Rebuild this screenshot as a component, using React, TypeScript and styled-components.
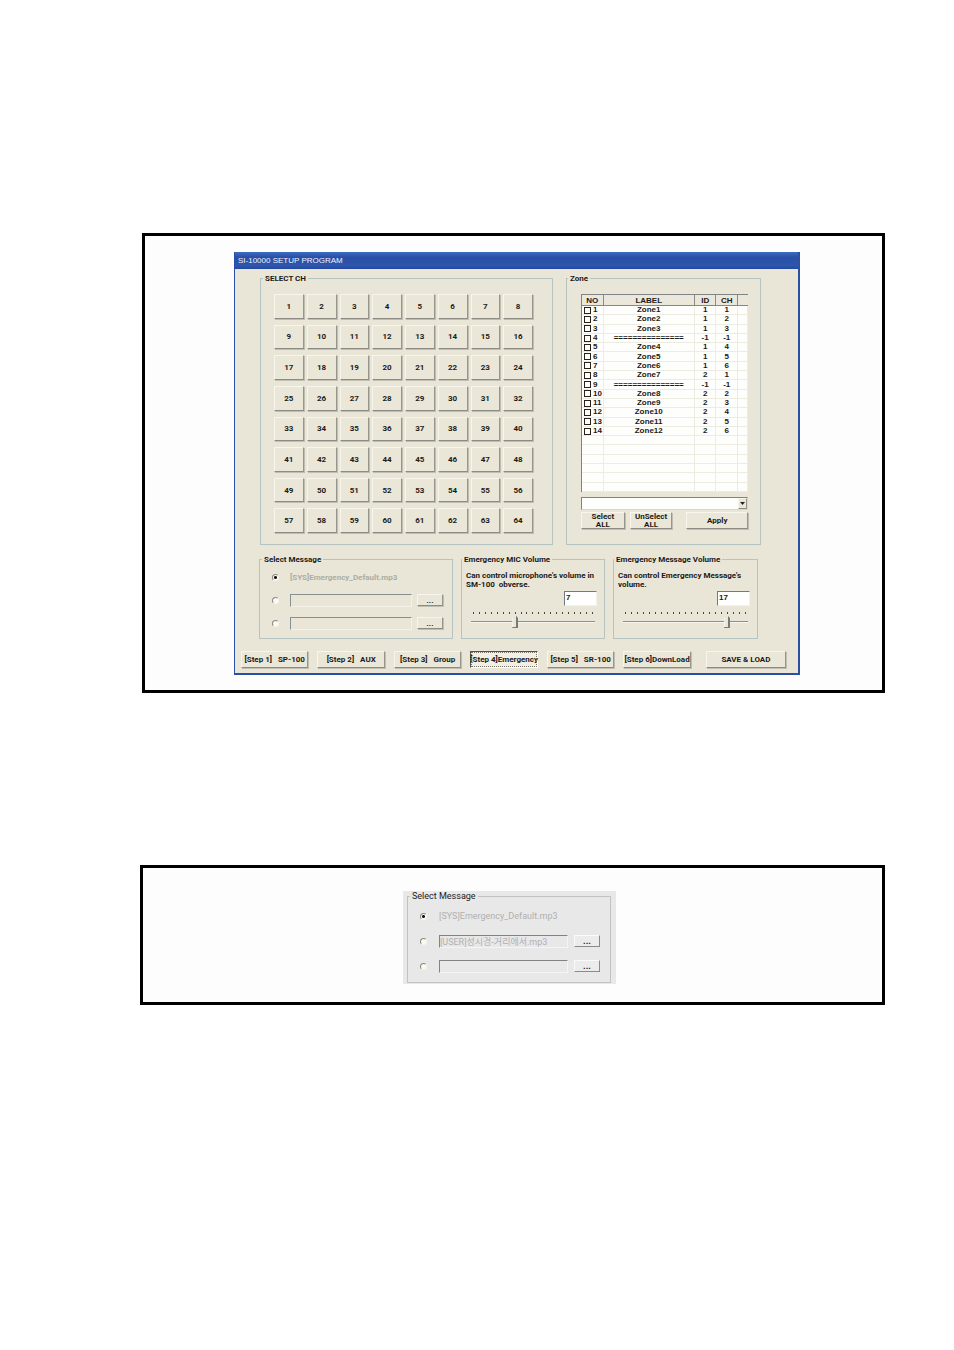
import React, { useState } from 'react';
import styled, { createGlobalStyle, css } from 'styled-components';

const GlobalStyle = createGlobalStyle`
  *, *::before, *::after { box-sizing: border-box; }
  body {
    margin: 0;
    background: #fff;
    color: #1c1a18;
    font: bold 8px/9px Roboto, "Noto Sans CJK KR", sans-serif;
  }
  button, input, select { font: inherit; color: inherit; margin: 0; border-radius: 0; }
`;

const Page = styled.main`
  display: flex;
  flex-direction: column;
  gap: 172px;
  padding: 233px 69px 100px 140px;
`;

const Frame = styled.section<{ $pad: string; $inset?: boolean }>`
  border: 3px solid #000;
  background: #fdfdfd;
  padding: ${(p) => p.$pad};
  margin-left: ${(p) => (p.$inset ? '2px' : '0')};
`;

const Window = styled.div`
  background: #e9e6d7;
  border: solid #2c4fa6;
  border-width: 0 2px 2px 1px;
`;

const TitleBar = styled.h1`
  margin: 0;
  padding: 0 3px;
  font: normal 8px/17px "Liberation Sans", sans-serif;
  color: #eef2ff;
  background: linear-gradient(#3c6cc0, #2a50a6 30%, #2c55ab 80%, #2448a0);
`;

const WindowBody = styled.div`
  padding: 5px 12px 5px 6px;
`;

const TopRow = styled.div`
  display: grid;
  grid-template-columns: 293fr 195fr;
  gap: 13px;
  padding: 0 25px 0 19px;
`;

const LowerRow = styled.div`
  display: grid;
  grid-template-columns: 194fr 144fr 145fr;
  column-gap: 8px;
  margin-top: 10px;
  padding: 0 28px 0 18px;
`;

const Group = styled.fieldset<{ $pad: string; $mono?: boolean }>`
  min-width: 0;
  margin: 0;
  padding: ${(p) => p.$pad};
  border: 1px solid ${(p) => (p.$mono ? '#c2c2c2' : '#b6c3c3')};
  display: flex;
  flex-direction: column;
`;

const Legend = styled.legend<{ $at: string }>`
  padding: 0 2px;
  margin-left: ${(p) => p.$at};
`;

const raised = css`
  border: 1px solid;
  border-color: #f7f5ec #96968c #8c8c84 #f7f5ec;
  background: #eae7d9;
  box-shadow: 1px 1px 0 #c0beb0;
`;

const Button = styled.button<{ $mono?: boolean }>`
  ${raised}
  display: flex;
  align-items: center;
  justify-content: center;
  padding: 0;
  min-width: 0;
  text-align: center;
  white-space: pre;
  ${(p) => p.$mono && css`
    background: #ececec;
    border-color: #fafafa #8a8a8a #8a8a8a #fafafa;
    box-shadow: none;
  `}
`;

const ChannelGrid = styled.div`
  flex: 1;
  display: grid;
  grid-template-columns: repeat(8, 1fr);
  grid-auto-rows: 1fr;
  gap: 6px 3px;
`;

const ZoneTable = styled.table`
  width: 100%;
  height: 198px;
  table-layout: fixed;
  border-collapse: separate;
  border-spacing: 0;
  border: solid #7d8488;
  border-width: 1px 0 0 1px;
  background: #fefefc;
  font-family: "Liberation Sans", sans-serif;
  text-align: center;

  th, td { padding: 0; overflow: hidden; white-space: nowrap; }
  th {
    height: 11px;
    background: #ebe7da;
    border-right: 1px solid #8d8b80;
    border-bottom: 1px solid #7c8a90;
  }
  th:last-child { border-right: 0; }
  td {
    height: 9px;
    line-height: 8px;
    border: solid #ecece0;
    border-width: 0 1px 1px 0;
  }
`;

const ZoneCheck = styled.label`
  display: flex;
  align-items: center;
  gap: 2px;
  padding-left: 2px;
`;

const CheckBox = styled.input`
  appearance: none;
  flex: none;
  width: 7px;
  height: 7px;
  border: 1px solid #2a2018;
  background: #fff;
  &:checked { background: #2a2018; box-shadow: inset 0 0 0 1px #fff; }
`;

const ComboWrap = styled.div`
  position: relative;
  margin-top: 5px;
  height: 13px;
`;

const Combo = styled.select`
  appearance: none;
  display: block;
  width: 100%;
  height: 13px;
  padding: 0 14px 0 2px;
  background: #fefefc;
  border: 1px solid;
  border-color: #7d8488 #d8d6c8 #d8d6c8 #7d8488;
`;

const ComboArrow = styled.span`
  ${raised}
  position: absolute;
  top: 1px;
  right: 1px;
  width: 9px;
  height: 11px;
  display: flex;
  align-items: center;
  justify-content: center;
  box-shadow: none;
  pointer-events: none;
`;

const ZoneActions = styled.div`
  display: grid;
  grid-template-columns: 44fr 43fr 71fr;
  column-gap: 5px;
  margin-top: 2px;
  button { height: 17px; line-height: 8px; }
  button:last-child { margin-left: 9px; }
`;

const MessageRow = styled.div<{ $gap: string }>`
  display: flex;
  align-items: center;
  gap: ${(p) => p.$gap};
  height: 12px;
  & + & { margin-top: 11px; }
`;

const Radio = styled.input`
  appearance: none;
  flex: none;
  width: 7px;
  height: 7px;
  margin-right: 6px;
  border: 1px solid;
  border-color: #8a8a80 #f6f4ea #f6f4ea #8a8a80;
  border-radius: 50%;
  background: #faf9f4;
  &:checked { background: radial-gradient(circle, #141210 0 1px, #faf9f4 2px); }
`;

const FileText = styled.label<{ $mono?: boolean }>`
  color: ${(p) => (p.$mono ? '#b0b0b0' : '#a9aea4')};
`;

const FileInput = styled.input<{ $mono?: boolean }>`
  flex: 1;
  min-width: 0;
  height: 13px;
  padding: 0;
  background: transparent;
  border: 1px solid;
  border-color: ${(p) => (p.$mono ? '#828282 #f4f4f4 #f4f4f4 #828282' : '#86908f #f4f2e8 #f4f2e8 #86908f')};
  color: #b0b0b0;
`;

const BrowseButton = styled(Button)`
  flex: none;
  width: 26px;
  height: 12px;
  font-weight: bold;
`;

const Description = styled.p`
  margin: 0;
  white-space: pre;
`;

const VolumeInput = styled.input`
  align-self: flex-end;
  width: 33px;
  height: 15px;
  margin: 2px 4px 0 0;
  padding: 0 1px 3px;
  background: #fefefe;
  border: 1px solid;
  border-color: #6f7b80 #f4f2e8 #f4f2e8 #6f7b80;
  font-family: "Liberation Sans", sans-serif;
`;

const Ticks = styled.div`
  display: flex;
  justify-content: space-between;
  margin: 6px 8px 0 7px;
  i { width: 1px; height: 2px; background: #4a463e; }
`;

const Slider = styled.input`
  appearance: none;
  display: block;
  height: 13px;
  margin: 1px 6px 0 5px;
  background: linear-gradient(#8a8f8a, #8a8f8a) 0 6px / 100% 1px no-repeat,
    linear-gradient(#f8f6ee, #f8f6ee) 0 7px / 100% 1px no-repeat;
  &::-webkit-slider-thumb {
    appearance: none;
    width: 6px;
    height: 13px;
    background: linear-gradient(90deg, #f8f6ee 1px, #eae7d9 1px 4px, #75797a 4px);
    border-bottom: 1px solid #75797a;
    clip-path: polygon(50% 0, 100% 25%, 100% 100%, 0 100%, 0 25%);
  }
`;

const StepBar = styled.nav`
  display: flex;
  gap: 9px;
  margin-top: 12px;
`;

const StepButton = styled(Button)<{ $active?: boolean; $last?: boolean }>`
  flex: ${(p) => (p.$last ? 80 : 67)} 1 0;
  height: 17px;
  margin-left: ${(p) => (p.$last ? '6px' : '0')};
  ${(p) => p.$active && css`
    background: #f2efe4;
    border-color: #55534c #fff #fff #55534c;
    outline: 1px dotted #77746a;
    outline-offset: -2px;
    box-shadow: none;
  `}
`;

const MessagePanel = styled.div`
  padding: 1px 5px 1px 4px;
  background: #e8e8e8;
  color: #222;
  font-weight: normal;
  font-size: 9px;
  ${MessageRow} + ${MessageRow} { margin-top: 13px; }
`;

const zones: [string, string, string][] = [
  ['Zone1', '1', '1'],
  ['Zone2', '1', '2'],
  ['Zone3', '1', '3'],
  ['===============', '-1', '-1'],
  ['Zone4', '1', '4'],
  ['Zone5', '1', '5'],
  ['Zone6', '1', '6'],
  ['Zone7', '2', '1'],
  ['===============', '-1', '-1'],
  ['Zone8', '2', '2'],
  ['Zone9', '2', '3'],
  ['Zone10', '2', '4'],
  ['Zone11', '2', '5'],
  ['Zone12', '2', '6'],
];

const steps = [
  '[Step 1]   SP-100',
  '[Step 2]   AUX',
  '[Step 3]   Group',
  '[Step 4]Emergency',
  '[Step 5]   SR-100',
  '[Step 6]DownLoad',
];

function MessageFields({ name, user, mono }: { name: string; user: string; mono?: boolean }) {
  return (
    <>
      <MessageRow $gap={mono ? '6px' : '5px'}>
        <Radio type="radio" name={name} id={`${name}-0`} defaultChecked />
        <FileText htmlFor={`${name}-0`} $mono={mono}>[SYS]Emergency_Default.mp3</FileText>
      </MessageRow>
      {[user, ''].map((value, i) => (
        <MessageRow key={i} $gap={mono ? '6px' : '5px'}>
          <Radio type="radio" name={name} aria-label={`User message ${i + 1}`} />
          <FileInput $mono={mono} defaultValue={value} aria-label={`File of user message ${i + 1}`} />
          <BrowseButton $mono={mono} type="button">...</BrowseButton>
        </MessageRow>
      ))}
    </>
  );
}

function Volume({ title, text, initial }: { title: string; text: string; initial: number }) {
  const [value, setValue] = useState(initial);
  return (
    <Group $pad="7px 3px 0 4px">
      <Legend $at="-4px">{title}</Legend>
      <Description>{text}</Description>
      <VolumeInput
        aria-label={title}
        value={value}
        onChange={(e) => setValue(Number(e.target.value) || 0)}
      />
      <Ticks>{Array.from({ length: 21 }, (_, i) => <i key={i} />)}</Ticks>
      <Slider
        type="range"
        min={0}
        max={20}
        aria-label={`${title} slider`}
        value={value}
        onChange={(e) => setValue(Number(e.target.value))}
      />
    </Group>
  );
}

export default function App() {
  return (
    <Page>
      <GlobalStyle />
      <Frame $inset $pad="16px 82px 15px 89px">
        <Window>
          <TitleBar>SI-10000 SETUP PROGRAM</TitleBar>
          <WindowBody>
            <TopRow>
              <Group $pad="11px 19px 11px 13px">
                <Legend $at="-11px">SELECT CH</Legend>
                <ChannelGrid>
                  {Array.from({ length: 64 }, (_, i) => (
                    <Button key={i} type="button">{i + 1}</Button>
                  ))}
                </ChannelGrid>
              </Group>
              <Group $pad="11px 12px 15px 14px">
                <Legend $at="-13px">Zone</Legend>
                <ZoneTable>
                  <colgroup>
                    <col style={{ width: '13%' }} />
                    <col />
                    <col style={{ width: '13%' }} />
                    <col style={{ width: '13%' }} />
                    <col style={{ width: '6%' }} />
                  </colgroup>
                  <thead>
                    <tr><th>NO</th><th>LABEL</th><th>ID</th><th>CH</th><th /></tr>
                  </thead>
                  <tbody>
                    {zones.map(([label, id, ch], i) => (
                      <tr key={i}>
                        <td><ZoneCheck><CheckBox type="checkbox" />{i + 1}</ZoneCheck></td>
                        <td>{label}</td>
                        <td>{id}</td>
                        <td>{ch}</td>
                        <td />
                      </tr>
                    ))}
                    {Array.from({ length: 6 }, (_, i) => (
                      <tr key={`empty-${i}`}><td /><td /><td /><td /><td /></tr>
                    ))}
                  </tbody>
                </ZoneTable>
                <ComboWrap>
                  <Combo aria-label="Zone group" defaultValue=""><option value="" /></Combo>
                  <ComboArrow>
                    <svg width="5" height="3" viewBox="0 0 10 6"><path d="M0 0h10L5 6z" fill="#222" /></svg>
                  </ComboArrow>
                </ComboWrap>
                <ZoneActions>
                  <Button type="button">{'Select\nALL'}</Button>
                  <Button type="button">{'UnSelect\nALL'}</Button>
                  <Button type="button">Apply</Button>
                </ZoneActions>
              </Group>
            </TopRow>
            <LowerRow>
              <Group $pad="7px 9px 9px 12px">
                <Legend $at="-10px">Select Message</Legend>
                <MessageFields name="message" user="" />
              </Group>
              <Volume
                title="Emergency MIC Volume"
                text={"Can control microphone's volume in\nSM-100  obverse."}
                initial={7}
              />
              <Volume
                title="Emergency Message Volume"
                text={"Can control Emergency Message's\nvolume."}
                initial={17}
              />
            </LowerRow>
            <StepBar>
              {steps.map((s, i) => (
                <StepButton key={s} type="button" $active={i === 3}>{s}</StepButton>
              ))}
              <StepButton type="button" $last>SAVE &amp; LOAD</StepButton>
            </StepBar>
          </WindowBody>
        </Window>
      </Frame>
      <Frame $pad="23px 266px 18px 260px">
        <MessagePanel>
          <Group $mono $pad="9px 10px 10px 12px">
            <Legend $at="-10px">Select Message</Legend>
            <MessageFields mono name="example" user="[USER]성시경-거리에서.mp3" />
          </Group>
        </MessagePanel>
      </Frame>
    </Page>
  );
}
